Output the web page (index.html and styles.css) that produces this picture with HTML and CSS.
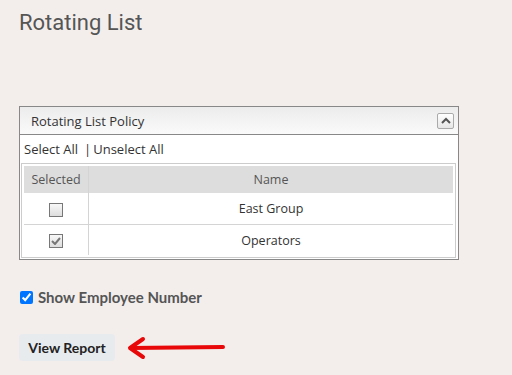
FILE: index.html
```html
<!DOCTYPE html>
<html lang="en">
<head>
  <meta charset="UTF-8">
  <meta name="viewport" content="width=device-width, initial-scale=1.0">
  <title>Rotating List</title>
  <link rel="stylesheet" href="styles.css">
</head>
<body>
  <h1 class="page-title">Rotating List</h1>

  <!-- Panneau de la politique -->
  <div class="panel">
    <div class="panel-header">
      <span>Rotating List Policy</span>
      <button class="collapse-btn" title="Collapse">
        <svg width="10" height="7" viewBox="0 0 10 7"><path d="M1 6 L5 2 L9 6" fill="none" stroke="#555" stroke-width="2"/></svg>
      </button>
    </div>
    <div class="select-links">
      <a href="#">Select All</a><span class="sep">|</span><a href="#">Unselect All</a>
    </div>
    <table class="policy-table">
      <thead>
        <tr>
          <th class="col-selected">Selected</th>
          <th>Name</th>
        </tr>
      </thead>
      <tbody>
        <tr>
          <td class="col-selected"><span class="fake-check"></span></td>
          <td>East Group</td>
        </tr>
        <tr>
          <td class="col-selected"><span class="fake-check checked">
            <svg width="10" height="8" viewBox="0 0 10 8"><path d="M1 4 L4 7 L9 1" fill="none" stroke="#777" stroke-width="2"/></svg>
          </span></td>
          <td>Operators</td>
        </tr>
      </tbody>
    </table>
  </div>

  <label class="option">
    <input type="checkbox" checked>
    Show Employee Number
  </label>

  <div class="actions">
    <button class="view-btn">View Report</button>
    <svg class="arrow" width="100" height="24" viewBox="0 0 100 24">
      <path d="M4 12 L96 11" stroke="#e8080a" stroke-width="4" stroke-linecap="round"/>
      <path d="M16 3 L3 12 L16 21" fill="none" stroke="#e8080a" stroke-width="4" stroke-linecap="round" stroke-linejoin="round"/>
    </svg>
  </div>
</body>
</html>
```

FILE: styles.css
```css
body {
  margin: 0;
  padding: 0 19px;
  background-color: #f3eeec;
  font-family: "Open Sans", sans-serif;
  color: #333;
}

.page-title {
  margin: 0;
  padding-top: 9px;
  font-family: Roboto, sans-serif;
  font-weight: 400;
  font-size: 22px;
  color: #555;
  line-height: 28px;
}

.panel {
  margin-top: 69px;
  width: 438px;
  border: 1px solid #888;
  background-color: #fff;
}

.panel-header {
  display: flex;
  align-items: center;
  justify-content: space-between;
  height: 27px;
  padding: 0 4px 0 11px;
  border-bottom: 1px solid #888;
  background: linear-gradient(#ececec, #fafafa);
  font-size: 13px;
}

.collapse-btn {
  width: 17px;
  height: 16px;
  padding: 0;
  border: 1px solid #aaa;
  border-radius: 2px;
  background: linear-gradient(#fff, #e6e6e6);
  display: flex;
  align-items: center;
  justify-content: center;
}

.select-links {
  height: 28px;
  line-height: 28px;
  padding-left: 4px;
  font-size: 13px;
}
.select-links a {
  color: #333;
  text-decoration: none;
}
.select-links .sep {
  margin: 0 2px 0 6px;
  color: #333;
}

.policy-table {
  width: 435px;
  margin: 0 0 1px 1px;
  border: 1px solid #ccc;
  border-collapse: separate;
  border-spacing: 0;
  padding: 2px;
  font-size: 12.5px;
}
.policy-table th {
  height: 27px;
  padding: 0;
  background-color: #ddd;
  color: #555;
  font-weight: 400;
  text-align: center;
}
.policy-table td {
  height: 30px;
  padding: 0;
  text-align: center;
  color: #333;
  border-top: 1px solid #d4d4d4;
}
.policy-table tbody tr:first-child td {
  border-top: none;
  height: 31px;
}
.policy-table .col-selected {
  width: 64px;
  border-right: 1px solid #d4d4d4;
}

.fake-check {
  display: inline-flex;
  align-items: center;
  justify-content: center;
  width: 12px;
  height: 12px;
  border: 1px solid #777;
  background: linear-gradient(#f8f8f8, #ddd);
  vertical-align: middle;
}

.option {
  display: flex;
  align-items: center;
  margin-top: 28px;
  font-family: Lato, sans-serif;
  font-weight: 700;
  font-size: 15px;
  color: #555;
}
.option input {
  margin: 0 5px 0 1px;
  width: 13px;
  height: 13px;
}

.actions {
  display: flex;
  align-items: center;
  margin-top: 28px;
}

.view-btn {
  width: 96px;
  height: 27px;
  border: none;
  border-radius: 4px;
  background-color: #e8ebee;
  font-family: Lato, sans-serif;
  font-weight: 700;
  font-size: 14px;
  color: #222;
}

.arrow {
  margin-left: 12px;
}
```
